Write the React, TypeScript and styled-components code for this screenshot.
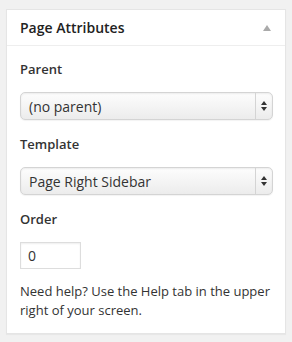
import styled, { createGlobalStyle } from "styled-components";

const GlobalStyle = createGlobalStyle`
  html, body {
    margin: 0;
    background: #f1f1f1;
  }
  body {
    padding: 9px 7px 8px 6px;
    font-family: "Open Sans", "Liberation Sans", sans-serif;
    color: #333;
  }
`;

const Box = styled.div`
  width: 280px;
  box-sizing: border-box;
  background: #fff;
  border: 1px solid #e5e5e5;
  box-shadow: 0 1px 1px rgba(0, 0, 0, 0.04);
`;

const Header = styled.div`
  height: 35px;
  display: flex;
  align-items: center;
  justify-content: space-between;
  padding: 0 13px 0 13px;
  border-bottom: 1px solid #eee;
`;

const Title = styled.h3`
  margin: 0;
  font-size: 14px;
  font-weight: 600;
  color: #222;
  line-height: 19px;
`;

const Toggle = styled.span`
  width: 0;
  height: 0;
  margin-right: 1px;
  margin-top: 1px;
  border-left: 4px solid transparent;
  border-right: 4px solid transparent;
  border-bottom: 6px solid #aaa;
`;

const Inside = styled.div`
  padding: 14px 12px 13px 13px;
`;

const Label = styled.p`
  margin: 0 0 14px;
  font-size: 13px;
  font-weight: 600;
  line-height: 18px;
  color: #333;
`;

const Select = styled.div`
  display: flex;
  align-items: stretch;
  height: 28px;
  box-sizing: border-box;
  margin-bottom: 15px;
  border: 1px solid #d4d4d4;
  border-radius: 5px;
  background: linear-gradient(#fdfdfd, #ececec);
  box-shadow: inset 0 1px 2px rgba(0, 0, 0, 0.07), 0 1px 1px rgba(0, 0, 0, 0.05);
  font-size: 14px;
  color: #333;
`;

const SelectValue = styled.span`
  flex: 1;
  display: flex;
  align-items: center;
  padding-left: 8px;
`;

const Arrows = styled.span`
  width: 16px;
  border-left: 1px solid #d4d4d4;
  display: flex;
  align-items: center;
  justify-content: center;
`;

const Input = styled.div`
  width: 61px;
  height: 27px;
  box-sizing: border-box;
  border: 1px solid #ddd;
  box-shadow: inset 0 1px 2px rgba(0, 0, 0, 0.07);
  display: flex;
  align-items: center;
  padding-left: 7px;
  font-size: 14px;
  color: #333;
  margin-bottom: 13px;
`;

const Help = styled.p`
  margin: 0;
  font-size: 13px;
  line-height: 19px;
  color: #333;
`;

function UpDown() {
  return (
    <svg width="8" height="12" viewBox="0 0 8 12">
      <path d="M4 1 L7 5 L1 5 Z" fill="#333" />
      <path d="M4 11 L7 7 L1 7 Z" fill="#333" />
    </svg>
  );
}

export default function App() {
  return (
    <>
      <GlobalStyle />
      <Box>
        <Header>
          <Title>Page Attributes</Title>
          <Toggle />
        </Header>
        <Inside>
          <Label>Parent</Label>
          <Select>
            <SelectValue>(no parent)</SelectValue>
            <Arrows><UpDown /></Arrows>
          </Select>
          <Label>Template</Label>
          <Select>
            <SelectValue>Page Right Sidebar</SelectValue>
            <Arrows><UpDown /></Arrows>
          </Select>
          <Label>Order</Label>
          <Input>0</Input>
          <Help>Need help? Use the Help tab in the upper right of your screen.</Help>
        </Inside>
      </Box>
    </>
  );
}
